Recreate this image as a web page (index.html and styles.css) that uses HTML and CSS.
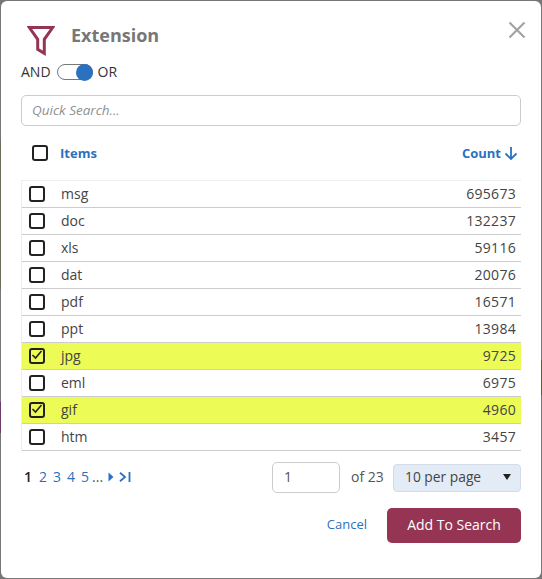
FILE: index.html
```html
<!DOCTYPE html>
<html lang="en">
<head>
<meta charset="utf-8">
<title>Extension</title>
<link rel="stylesheet" href="styles.css">
</head>
<body>
<div class="modal">
  <header class="head">
    <svg class="funnel" width="28" height="30" viewBox="0 0 28 30"><path d="M2.300 1.500H25.700L17.300 13.300V27.300L10.700 23.300V13.300Z" fill="none" stroke="#953553" stroke-width="3"/></svg>
    <h1 class="title">Extension</h1>
    <svg class="close" width="18" height="18" viewBox="0 0 18 18"><path d="M1.500 1.500L16.500 16.500M16.500 1.500L1.500 16.500" stroke="#a3a3a3" stroke-width="2.200" fill="none"/></svg>
  </header>
  <div class="toggle-row">
    <span>AND</span>
    <span class="toggle"><span class="knob"></span></span>
    <span>OR</span>
  </div>
  <div class="search">Quick Search...</div>
  <div class="table-head">
    <span class="check"></span>
    <span class="th-items">Items</span>
    <span class="th-count">Count
      <svg width="14" height="14" viewBox="0 0 14 14"><path d="M7 1V13M1.500 7.500L7 13L12.500 7.500" fill="none" stroke="#2a72c0" stroke-width="1.800"/></svg>
    </span>
  </div>
  <div class="rows">
    <div class="row"><span class="check"></span><span class="name">msg</span><span class="num">695673</span></div>
    <div class="row"><span class="check"></span><span class="name">doc</span><span class="num">132237</span></div>
    <div class="row"><span class="check"></span><span class="name">xls</span><span class="num">59116</span></div>
    <div class="row"><span class="check"></span><span class="name">dat</span><span class="num">20076</span></div>
    <div class="row"><span class="check"></span><span class="name">pdf</span><span class="num">16571</span></div>
    <div class="row"><span class="check"></span><span class="name">ppt</span><span class="num">13984</span></div>
    <div class="row on"><span class="check"><svg width="12" height="12" viewBox="0 0 12 12"><path d="M1.500 5L4.500 8L10.500 1" fill="none" stroke="#222" stroke-width="1.600"/></svg></span><span class="name">jpg</span><span class="num">9725</span></div>
    <div class="row"><span class="check"></span><span class="name">eml</span><span class="num">6975</span></div>
    <div class="row on"><span class="check"><svg width="12" height="12" viewBox="0 0 12 12"><path d="M1.500 5L4.500 8L10.500 1" fill="none" stroke="#222" stroke-width="1.600"/></svg></span><span class="name">gif</span><span class="num">4960</span></div>
    <div class="row"><span class="check"></span><span class="name">htm</span><span class="num">3457</span></div>
  </div>
  <div class="pager">
    <div class="pages">
      <span class="cur">1</span><a>2</a><a>3</a><a>4</a><a>5</a><span class="dots">...</span>
      <svg class="next" width="6" height="10" viewBox="0 0 6 10"><path d="M0.500 0.500L5.500 5L0.500 9.500Z" fill="#2a72c0"/></svg>
      <svg class="last" width="12" height="10" viewBox="0 0 12 10"><path d="M1 0.800L6 5L1 9.200M10.500 0V10" fill="none" stroke="#2a72c0" stroke-width="1.800"/></svg>
    </div>
    <div class="page-input">1</div>
    <span class="of">of 23</span>
    <div class="per-page"><span>10 per page</span><svg width="8" height="6" viewBox="0 0 8 6"><path d="M0 0H8L4 6Z" fill="#222"/></svg></div>
  </div>
  <footer class="foot">
    <a class="cancel">Cancel</a>
    <button class="add">Add To Search</button>
  </footer>
</div>
</body>
</html>
```
FILE: styles.css
```css
* { box-sizing: border-box; }
html, body { margin: 0; height: 100%; }
body {
  background:
    linear-gradient(#6c705c, #6c705c) 0 140px / 1px 150px no-repeat,
    linear-gradient(#6f3a6e, #6f3a6e) 0 402px / 1px 31px no-repeat,
    linear-gradient(#5a5c40, #5a5c40) 541px 360px / 1px 35px no-repeat,
    #777;
  padding: 1px 0 1px 1px;
  font-family: "Open Sans", "Noto Sans", sans-serif;
  color: #444;
  overflow: hidden;
}
.modal {
  width: 540px;
  height: 577px;
  background: #fff;
  border-radius: 6px;
  padding: 0 20px;
}
.head {
  display: flex;
  align-items: flex-start;
  height: 62px;
  padding: 23px 0 0 6px;
}
.funnel { flex: none; margin: 2px 16px 0 0; }
.title {
  margin: 0;
  font-size: 18px;
  line-height: 22px;
  font-weight: 700;
  color: #777;
  flex: 1;
}
.close { margin: -3px -5px 0 0; }
.toggle-row {
  display: flex;
  align-items: center;
  height: 18px;
  font-size: 14px;
  color: #333;
  gap: 5px;
}
.toggle-row > span:first-child, .toggle-row > span:last-child { padding-bottom: 2px; }
.toggle {
  width: 36px;
  height: 16px;
  margin-left: 1px;
  border: 1px solid #777;
  border-radius: 8px;
  position: relative;
}
.knob {
  position: absolute;
  right: -1px;
  top: -1px;
  width: 17px;
  height: 17px;
  border-radius: 50%;
  background: #2a72c0;
}
.search {
  margin-top: 14px;
  height: 31px;
  border: 1px solid #ccc;
  border-radius: 5px;
  padding-left: 10px;
  font-size: 13.500px;
  line-height: 29px;
  font-style: italic;
  color: #909090;
}
.table-head {
  display: flex;
  align-items: center;
  height: 54px;
  padding: 0 3px 0 11px;
  font-size: 13px;
  font-weight: 700;
  color: #2a72c0;
}
.th-items { margin-left: 12px; flex: 1; }
.th-count { display: flex; align-items: center; gap: 3px; }
.check {
  flex: none;
  width: 16px;
  height: 16px;
  border: 2px solid #222;
  border-radius: 3px;
  background: transparent;
  display: flex;
}
.check svg { flex: none; margin: 0; }
.rows { border-top: 1px solid #eee; border-left: 1px solid #eee; }
.row {
  display: flex;
  align-items: center;
  height: 27px;
  padding: 0 5px 0 7px;
  border-bottom: 1px solid #ccc;
  font-size: 14px;
  color: #444;
}
.row.on { background: #ecfb56; }
.name { margin-left: 16px; flex: 1; padding-bottom: 2px; }
.num { letter-spacing: 0.300px; padding-bottom: 2px; }
.pager {
  display: flex;
  align-items: center;
  margin-top: 11px;
  height: 31px;
}
.pages {
  display: flex;
  align-items: center;
  flex: none;
  width: 251px;
  padding-left: 3px;
  padding-bottom: 2px;
  font-size: 14px;
  color: #2a72c0;
}
.pages a { margin-right: 6px; }
.cur { color: #222; font-weight: 600; margin-right: 7px; }
.dots { color: #555; margin-left: -3px; margin-right: 5px; }
.next { margin-right: 5px; }
.page-input {
  flex: none;
  width: 68px;
  height: 31px;
  border: 1px solid #ccc;
  border-radius: 5px;
  padding-left: 11px;
  font-size: 14px;
  line-height: 28px;
  color: #555;
}
.of { flex: none; margin-left: 11px; width: 42px; padding-bottom: 2px; font-size: 14px; color: #555; }
.per-page {
  flex: none;
  width: 128px;
  height: 28px;
  display: flex;
  align-items: center;
  justify-content: space-between;
  padding: 0 9px 2px 11px;
  background: #e3ebf6;
  border: 1px solid #d3dbe6;
  border-radius: 4px;
  font-size: 13.800px;
  color: #444;
}
.foot {
  display: flex;
  align-items: center;
  justify-content: flex-end;
  margin-top: 15px;
}
.cancel { font-size: 13px; color: #2a72c0; margin-right: 20px; padding-bottom: 3px; }
.add {
  width: 134px;
  height: 35px;
  border: 0;
  border-radius: 5px;
  padding: 0 0 2px;
  background: #953553;
  color: #fff;
  font: 500 14px "Open Sans", sans-serif;
}
```
